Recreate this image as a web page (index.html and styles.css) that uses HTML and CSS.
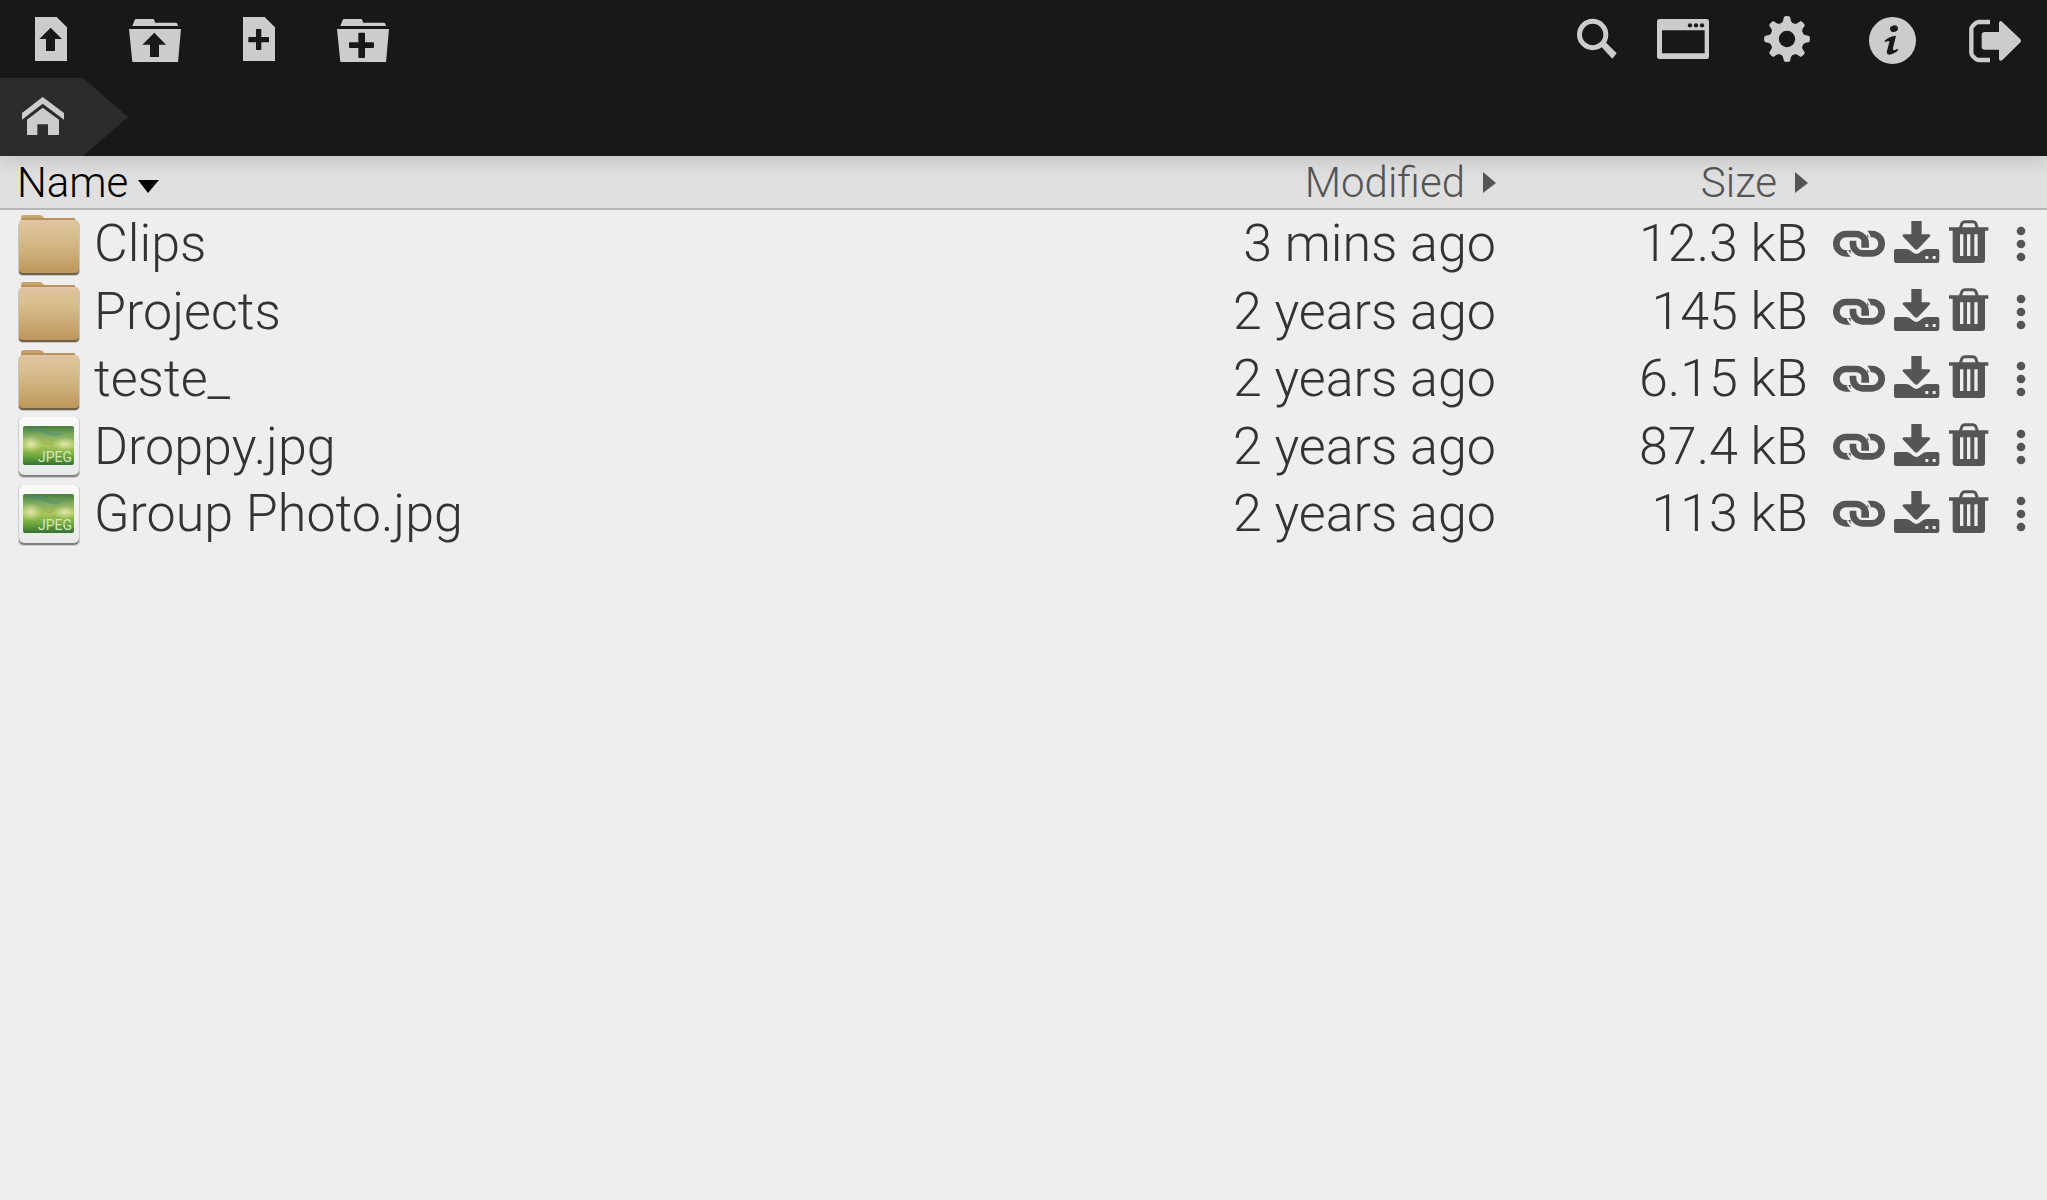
FILE: index.html
```html
<!DOCTYPE html>
<html lang="en">
<head>
<meta charset="utf-8">
<meta name="viewport" content="width=device-width, initial-scale=1">
<title>Files</title>
<link rel="stylesheet" href="styles.css">
</head>
<body>
<svg class="sprite" aria-hidden="true">
  <linearGradient id="folder-body" x1="0" y1="0" x2="0" y2="1"><stop offset="0" stop-color="#dfc4a0"/><stop offset=".3" stop-color="#d9be8f"/><stop offset=".65" stop-color="#cbac78"/><stop offset="1" stop-color="#bd965a"/></linearGradient>
  <linearGradient id="paper" x1="0" y1="0" x2="0" y2="1"><stop offset="0" stop-color="#fafafa"/><stop offset="1" stop-color="#e9e9e9"/></linearGradient>
  <linearGradient id="photo" x1="0" y1="0" x2="0" y2="1"><stop offset="0" stop-color="#477d3e"/><stop offset=".25" stop-color="#82ad62"/><stop offset=".5" stop-color="#a9c85c"/><stop offset=".75" stop-color="#75aa3e"/><stop offset="1" stop-color="#327433"/></linearGradient>
  <radialGradient id="glow"><stop offset="0" stop-color="#eee8bb" stop-opacity=".9"/><stop offset="1" stop-color="#dce29b" stop-opacity="0"/></radialGradient>
  <symbol id="upload-file" viewBox="72 42 168 150"><path fill-rule="evenodd" d="M105 51H170L201 82V183H105ZM152 83L118 117H138V153H165V117H186Z"/></symbol>
  <symbol id="upload-folder" viewBox="384 42 168 150"><path fill-rule="evenodd" d="M397 78L404 60Q405 57 409 57H460Q463 57 465 68H529Q532 68 534 78ZM387 87H543L534 186H397ZM463 98L427 134H450V171H477V134H498Z"/></symbol>
  <symbol id="new-file" viewBox="72 42 168 150"><path fill-rule="evenodd" d="M105 51H170L201 82V183H105ZM146 87Q144 87 144 89V111H123Q121 111 121 113V125Q121 127 123 127H144V148Q144 150 146 150H158Q160 150 160 148V127H181Q183 127 183 125V113Q183 111 181 111H160V89Q160 87 158 87Z"/></symbol>
  <symbol id="new-folder" viewBox="384 42 168 150"><path fill-rule="evenodd" d="M397 78L404 60Q405 57 409 57H460Q463 57 465 68H529Q532 68 534 78ZM387 87H543L534 186H397ZM454 98Q451 98 451 101V127H426Q423 127 423 130V141Q423 144 426 144H451V171Q451 174 454 174H468Q471 174 471 171V144H495Q498 144 498 141V130Q498 127 495 127H471V101Q471 98 468 98Z"/></symbol>
  <symbol id="search" viewBox="27 42 168 150"><circle cx="98" cy="103.500" r="39.500" fill="none" stroke="currentColor" stroke-width="15"/><path d="M121 137L134 124L170 160L157 176Z"/></symbol>
  <symbol id="window" viewBox="285 42 168 150"><path fill-rule="evenodd" d="M298 57H440Q447 57 447 64V170Q447 177 440 177H298Q291 177 291 170V64Q291 57 298 57ZM306 91V160H434V91Z"/><g fill="#181818"><circle cx="390" cy="76" r="6.500"/><circle cx="408" cy="76" r="6.500"/><circle cx="426" cy="76" r="6.500"/></g></symbol>
  <path id="tooth" d="M672 50Q681 46 690 50L693 63Q695 69 703 72H659Q667 69 669 63Z"/>
  <symbol id="gear" viewBox="597 42 168 150"><circle cx="681" cy="117" r="37" fill="none" stroke="currentColor" stroke-width="25"/><use href="#tooth"/><use href="#tooth" transform="rotate(45 681 117)"/><use href="#tooth" transform="rotate(90 681 117)"/><use href="#tooth" transform="rotate(135 681 117)"/><use href="#tooth" transform="rotate(180 681 117)"/><use href="#tooth" transform="rotate(225 681 117)"/><use href="#tooth" transform="rotate(270 681 117)"/><use href="#tooth" transform="rotate(315 681 117)"/></symbol>
  <symbol id="info" viewBox="909 42 168 150"><circle cx="997.500" cy="121.500" r="70.500"/><g fill="#181818"><ellipse cx="1002" cy="86" rx="12" ry="9.500" transform="rotate(-15 1002 86)"/><path d="M974 122Q988 109 1008 107L999 144Q998 151 1002 151Q1007 150 1012 146L1015 150Q1002 163 987 164Q979 163 981 153L988 126Q988 119 976 127Z"/></g></symbol>
  <symbol id="sign-out" viewBox="1221 42 168 150"><path d="M1290 66H1256Q1250 66 1244 72L1238 78Q1234 82 1234 88V158Q1234 164 1238 168L1244 174Q1250 180 1256 180H1290" fill="none" stroke="currentColor" stroke-width="13"/><path d="M1274 96H1317V69Q1318 60 1326 65L1380 116Q1386 122 1380 128L1327 180Q1318 186 1317 177V149H1274Q1265 149 1265 140V105Q1265 96 1274 96Z"/></symbol>
  <symbol id="home" viewBox="66 291 126 114"><path d="M128 291L192 339V359L128 311L66 359V339ZM128 323L177 359V405H144V373H112V405H81V359Z"/></symbol>
  <symbol id="link" viewBox="39 30 156 141"><g fill="none" stroke="currentColor" stroke-width="20"><path d="M92 130H78A29 29 0 0 1 78 72H108A29 29 0 0 1 137 101V103H124"/><path d="M99 92V101A29 29 0 0 0 128 130H156A29 29 0 0 0 156 72H142"/></g><path class="link-cut" d="M132 59Q144 66 150 82M82 121Q88 135 101 143"/></symbol>
  <symbol id="download" viewBox="222 30 138 141"><path fill-rule="evenodd" d="M274 33H305V73H327Q333 75 330 79L294 117Q289 121 284 117L248 79Q246 74 252 73H274ZM228 117H260Q268 118 274 124Q289 140 304 124Q310 118 320 117H352Q358 117 358 123V152Q358 159 351 159H229Q222 159 222 152V123Q222 117 228 117ZM316 138V147H325V138ZM338 138V147H347V138Z"/></symbol>
  <symbol id="trash" viewBox="387 30 120 141"><path d="M421 54L426 40Q428 35 434 35H459Q465 35 467 40L472 54" fill="none" stroke="currentColor" stroke-width="9"/><path fill-rule="evenodd" d="M387 52H505V62H495V150Q495 159 486 159H407Q398 159 398 150V62H387ZM420 73V138H430V73ZM441 73V138H451V73ZM463 73V138H473V73Z"/></symbol>
  <symbol id="more" viewBox="586 30 30 141"><circle cx="601" cy="63" r="13"/><circle cx="601" cy="102" r="13"/><circle cx="601" cy="141" r="13"/></symbol>
  <symbol id="down" viewBox="0 0 21 13"><path d="M0 0H21L10 13Z"/></symbol>
  <symbol id="right" viewBox="0 0 13 21"><path d="M0 0L13 11L0 21Z"/></symbol>
  <symbol id="folder" viewBox="0 0 62 62"><path d="M3 8V4Q3 1 6 1H22Q24 1 26 4H55Q57 4 58 7V10H3Z" fill="#c6a36b"/><rect x="0" y="7" width="62" height="55" rx="5" fill="#777" opacity=".35"/><rect x="1" y="8" width="60" height="53" rx="4" fill="#6f6048"/><rect x="1" y="6" width="60" height="53" rx="4" fill="url(#folder-body)"/><path d="M4 5H57" stroke="#a98251" stroke-width="1"/><path d="M4 7H58" stroke="#e4c6ab"/></symbol>
  <symbol id="jpeg" viewBox="0 0 62 62"><rect x="0" y="1" width="62" height="61" rx="5" fill="#999" opacity=".4"/><rect x="1" y="4" width="60" height="57" rx="5" fill="#808080"/><rect x="1" y="1" width="60" height="58" rx="5" fill="url(#paper)"/><rect x="5" y="10" width="51" height="39" rx="2" fill="url(#photo)"/><ellipse cx="13" cy="28" rx="11" ry="9" fill="url(#glow)"/><ellipse cx="47" cy="28" rx="12" ry="7" fill="url(#glow)"/><path d="M11 15Q20 11 28 16T43 17" fill="none" stroke="#4c8b80" stroke-width="3" opacity=".5"/><circle cx="31" cy="25" r="4" fill="none" stroke="#ad9b58" opacity=".6"/></symbol>
</svg>

<header class="chrome">
  <div class="toolbar">
    <div class="tools">
      <button class="tool" aria-label="Upload files"><svg><use href="#upload-file"/></svg></button>
      <button class="tool" aria-label="Upload folder"><svg><use href="#upload-folder"/></svg></button>
      <button class="tool" aria-label="Create file"><svg><use href="#new-file"/></svg></button>
      <button class="tool" aria-label="Create folder"><svg><use href="#new-folder"/></svg></button>
    </div>
    <div class="tools">
      <button class="tool tool-search" aria-label="Search"><svg><use href="#search"/></svg></button>
      <button class="tool" aria-label="Split view"><svg><use href="#window"/></svg></button>
      <button class="tool" aria-label="Options"><svg><use href="#gear"/></svg></button>
      <button class="tool" aria-label="About"><svg><use href="#info"/></svg></button>
      <button class="tool" aria-label="Sign out"><svg><use href="#sign-out"/></svg></button>
    </div>
  </div>
  <nav class="path" aria-label="Path">
    <a class="crumb" href="#" aria-label="Home"><svg><use href="#home"/></svg></a>
  </nav>
</header>

<main>
  <table class="files">
    <colgroup><col><col class="col-modified"><col class="col-size"><col class="col-actions"></colgroup>
    <thead>
      <tr>
        <th aria-sort="ascending"><button class="sort sort-active">Name<svg class="down"><use href="#down"/></svg></button></th>
        <th class="num"><button class="sort">Modified<svg class="right"><use href="#right"/></svg></button></th>
        <th class="num"><button class="sort">Size<svg class="right"><use href="#right"/></svg></button></th>
        <th></th>
      </tr>
    </thead>
    <tbody>
      <tr>
        <td><a class="entry" href="#"><svg><use href="#folder"/></svg>Clips</a></td><td class="num">3 mins ago</td><td class="num">12.3 kB</td>
        <td><div class="actions"><button class="link" aria-label="Share link"><svg><use href="#link"/></svg></button><button class="download" aria-label="Download"><svg><use href="#download"/></svg></button><button class="trash" aria-label="Delete"><svg><use href="#trash"/></svg></button><button class="more" aria-label="More"><svg><use href="#more"/></svg></button></div></td>
      </tr>
      <tr>
        <td><a class="entry" href="#"><svg><use href="#folder"/></svg>Projects</a></td><td class="num">2 years ago</td><td class="num">145 kB</td>
        <td><div class="actions"><button class="link" aria-label="Share link"><svg><use href="#link"/></svg></button><button class="download" aria-label="Download"><svg><use href="#download"/></svg></button><button class="trash" aria-label="Delete"><svg><use href="#trash"/></svg></button><button class="more" aria-label="More"><svg><use href="#more"/></svg></button></div></td>
      </tr>
      <tr>
        <td><a class="entry" href="#"><svg><use href="#folder"/></svg>teste_</a></td><td class="num">2 years ago</td><td class="num">6.15 kB</td>
        <td><div class="actions"><button class="link" aria-label="Share link"><svg><use href="#link"/></svg></button><button class="download" aria-label="Download"><svg><use href="#download"/></svg></button><button class="trash" aria-label="Delete"><svg><use href="#trash"/></svg></button><button class="more" aria-label="More"><svg><use href="#more"/></svg></button></div></td>
      </tr>
      <tr>
        <td><a class="entry" href="#"><svg viewBox="0 0 62 62"><use href="#jpeg"/><text x="20" y="46" class="format">JPEG</text></svg>Droppy.jpg</a></td><td class="num">2 years ago</td><td class="num">87.4 kB</td>
        <td><div class="actions"><button class="link" aria-label="Share link"><svg><use href="#link"/></svg></button><button class="download" aria-label="Download"><svg><use href="#download"/></svg></button><button class="trash" aria-label="Delete"><svg><use href="#trash"/></svg></button><button class="more" aria-label="More"><svg><use href="#more"/></svg></button></div></td>
      </tr>
      <tr>
        <td><a class="entry" href="#"><svg viewBox="0 0 62 62"><use href="#jpeg"/><text x="20" y="46" class="format">JPEG</text></svg>Group Photo.jpg</a></td><td class="num">2 years ago</td><td class="num">113 kB</td>
        <td><div class="actions"><button class="link" aria-label="Share link"><svg><use href="#link"/></svg></button><button class="download" aria-label="Download"><svg><use href="#download"/></svg></button><button class="trash" aria-label="Delete"><svg><use href="#trash"/></svg></button><button class="more" aria-label="More"><svg><use href="#more"/></svg></button></div></td>
      </tr>
    </tbody>
  </table>
</main>
</body>
</html>
```
FILE: styles.css
```css
* { box-sizing: border-box; }

body {
  margin: 0;
  background: #eee;
  color: #333;
  font: 300 52px/67px Roboto, sans-serif;
}

button {
  margin: 0;
  padding: 0;
  border: 0;
  background: none;
  color: inherit;
  font: inherit;
  cursor: pointer;
}

svg {
  display: block;
  flex: none;
  fill: currentColor;
}

.sprite {
  position: absolute;
  width: 0;
  height: 0;
}

/* Dark bars */
.chrome {
  position: relative;
  background: #181818;
  color: #ccc;
  box-shadow: 0 0 24px rgba(0, 0, 0, .2);
}

.toolbar,
.tools { display: flex; }

.toolbar { justify-content: space-between; }

.tool {
  display: grid;
  place-items: center;
  width: 104px;
  height: 78px;
}

.tool-search { width: 68px; }

.tool svg {
  width: 56px;
  height: 50px;
}

.path {
  display: flex;
  height: 78px;
}

.crumb {
  display: flex;
  align-items: center;
  width: 128px;
  padding: 0 0 2px 22px;
  background: #2c2c2c;
  color: #ccc;
  clip-path: polygon(0 0, 83px 0, 100% 50%, 83px 100%, 0 100%);
}

.crumb svg {
  width: 42px;
  height: 38px;
}

/* File list */
.files {
  width: 100%;
  table-layout: fixed;
  border-spacing: 0;
}

.col-modified { width: 360px; }
.col-size { width: 312px; }
.col-actions { width: 239px; }

th,
td {
  padding: 0;
  text-align: left;
  font-weight: 300;
  white-space: nowrap;
}

th {
  height: 54px;
  padding-top: 2px;
  border-bottom: 2px solid #b7b7b7;
  background: #e0e0e0;
  color: #555;
  font-size: 42px;
  line-height: 50px;
}

td { height: 67px; }
tr:nth-child(even) td { height: 68px; }

.num { text-align: right; }

.sort {
  display: inline-flex;
  align-items: center;
  gap: 18px;
  vertical-align: top;
}

.sort-active {
  gap: 10px;
  padding-left: 17px;
  color: #000;
}

.down {
  width: 21px;
  height: 13px;
  margin-top: 6px;
}

.right {
  width: 13px;
  height: 21px;
  margin-bottom: 2px;
}

.entry {
  display: flex;
  align-items: center;
  gap: 14px;
  padding-left: 18px;
  color: inherit;
  text-decoration: none;
}

.entry svg {
  width: 62px;
  height: 62px;
  margin-top: 2px;
}

.actions {
  display: flex;
  gap: 9px;
  padding-left: 25px;
  color: #555;
}

.actions svg {
  width: 100%;
  height: 47px;
}

.link { width: 52px; }
.download { width: 46px; }
.trash { width: 40px; }

.more {
  width: 10px;
  margin-left: 18px;
}

.link-cut {
  fill: none;
  stroke: #eee;
  stroke-width: 6px;
}

.format {
  fill: #d5e3bd;
  font: 400 14px Roboto, sans-serif;
}
```
